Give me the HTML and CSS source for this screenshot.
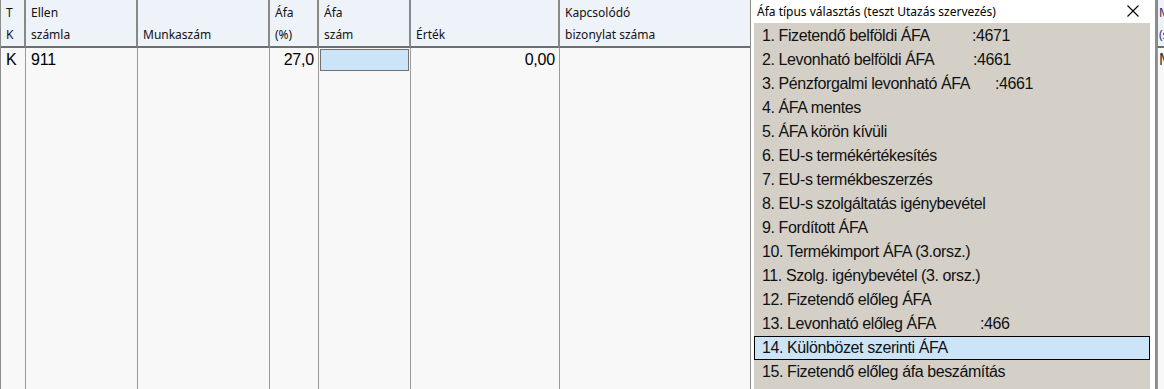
FILE: index.html
```html
<!DOCTYPE html>
<html lang="hu">
<head>
<meta charset="utf-8">
<title>Áfa típus választás</title>
<link rel="stylesheet" href="styles.css">
</head>
<body>
<div class="screen">
  <div class="grid">
    <div class="hcell"><span>T</span><span>K</span></div>
    <div class="hcell"><span>Ellen</span><span>számla</span></div>
    <div class="hcell"><span>&nbsp;</span><span>Munkaszám</span></div>
    <div class="hcell"><span>Áfa</span><span>(%)</span></div>
    <div class="hcell"><span>Áfa</span><span>szám</span></div>
    <div class="hcell"><span>&nbsp;</span><span>Érték</span></div>
    <div class="hcell"><span>Kapcsolódó</span><span>bizonylat száma</span></div>
    <div class="hcell extra"><span>Megjegyzés</span><span>(szöveg)</span></div>

    <div class="dcell">K</div>
    <div class="dcell">911</div>
    <div class="dcell"></div>
    <div class="dcell num">27,0</div>
    <div class="dcell edit"><div class="editbox"></div></div>
    <div class="dcell num">0,00</div>
    <div class="dcell"></div>
    <div class="dcell extra">M</div>

    <div class="fcell"></div>
    <div class="fcell"></div>
    <div class="fcell"></div>
    <div class="fcell"></div>
    <div class="fcell"></div>
    <div class="fcell"></div>
    <div class="fcell"></div>
    <div class="fcell"></div>
  </div>

  <div class="popup">
    <div class="titlebar">
      <span class="title">Áfa típus választás (teszt Utazás szervezés)</span>
      <svg class="close" width="12" height="12" viewBox="0 0 12 12"><path d="M0.5 0.5 L11.5 11.5 M11.5 0.5 L0.5 11.5" stroke="#000" stroke-width="1.1" fill="none"/></svg>
    </div>
    <ul class="list">
      <li><span class="label w210">1. Fizetendő belföldi ÁFA</span>:4671</li>
      <li><span class="label w211">2. Levonható belföldi ÁFA</span>:4661</li>
      <li><span class="label w233">3. Pénzforgalmi levonható ÁFA</span>:4661</li>
      <li>4. ÁFA mentes</li>
      <li>5. ÁFA körön kívüli</li>
      <li>6. EU-s termékértékesítés</li>
      <li>7. EU-s termékbeszerzés</li>
      <li>8. EU-s szolgáltatás igénybevétel</li>
      <li>9. Fordított ÁFA</li>
      <li>10. Termékimport ÁFA (3.orsz.)</li>
      <li>11. Szolg. igénybevétel (3. orsz.)</li>
      <li>12. Fizetendő előleg ÁFA</li>
      <li><span class="label w218">13. Levonható előleg ÁFA</span>:466</li>
      <li class="selected">14. Különbözet szerinti ÁFA</li>
      <li>15. Fizetendő előleg áfa beszámítás</li>
    </ul>
  </div>
</div>
</body>
</html>
```

FILE: styles.css
```css
html, body {
  margin: 0;
  padding: 0;
  background: #f8f8f8;
  overflow: hidden;
}
.screen {
  position: relative;
  width: 1164px;
  height: 389px;
  overflow: hidden;
  font-family: "Liberation Sans", Arial, sans-serif;
  color: #000;
}
.grid {
  display: grid;
  grid-template-columns: 25px 112px 132px 49px 92px 149px 598px 200px;
  grid-template-rows: 48px 24px 330px;
  width: max-content;
  border-left: 1px solid #8c8c8c;
}
.hcell {
  box-sizing: border-box;
  background: #eef3f9;
  border-right: 2px solid #888;
  border-bottom: 2px solid #6e6e6e;
  padding: 2px 0 0 5px;
  display: flex;
  flex-direction: column;
  font-family: "Noto Sans", sans-serif;
  font-size: 12px;
  line-height: 22px;
  color: #111;
  white-space: nowrap;
  overflow: hidden;
}
.hcell.extra {
  color: #3b2a5a;
  padding-left: 1px;
}
.dcell {
  box-sizing: border-box;
  border-right: 1px solid #9a9a9a;
  padding: 0 5px;
  font-size: 16px;
  letter-spacing: -0.2px;
  line-height: 24px;
  white-space: nowrap;
  overflow: hidden;
}
.dcell.num {
  text-align: right;
  padding-right: 4px;
}
.dcell.edit {
  padding: 1px 1px 0 1px;
}
.editbox {
  height: 22px;
  background: #cce4f7;
  border: 1px solid #707070;
  box-sizing: border-box;
}
.dcell.extra {
  color: #1d3a40;
  padding-left: 1px;
}
.fcell {
  box-sizing: border-box;
  border-right: 1px solid #9a9a9a;
}

.popup {
  position: absolute;
  left: 750px;
  top: 0;
  width: 407px;
  height: 400px;
  box-sizing: border-box;
  background: #fff;
  border-left: 1px solid #8c8c8c;
  border-right: 2px solid #8c8c8c;
  padding: 0 5px 0 3px;
}
.titlebar {
  height: 22px;
  display: flex;
  align-items: center;
  justify-content: space-between;
  padding: 0 11px 1px 3px;
}
.title {
  font-family: "Noto Sans", sans-serif;
  font-size: 12px;
  color: #000;
  white-space: nowrap;
}
.close {
  display: block;
}
.list {
  list-style: none;
  margin: 0;
  padding: 1px 0 0 0;
  background: #d4d0c8;
  height: 380px;
}
.list li {
  box-sizing: border-box;
  height: 24px;
  line-height: 24px;
  padding-left: 8px;
  font-size: 16px;
  letter-spacing: -0.4px;
  white-space: nowrap;
  color: #111;
}
.label {
  display: inline-block;
}
.w210 { width: 210px; }
.w211 { width: 211px; }
.w233 { width: 233px; }
.w218 { width: 218px; }
.list li.selected {
  background: #cce4f7;
  border: 1px solid #000;
  line-height: 22px;
  padding-left: 7px;
}
```
